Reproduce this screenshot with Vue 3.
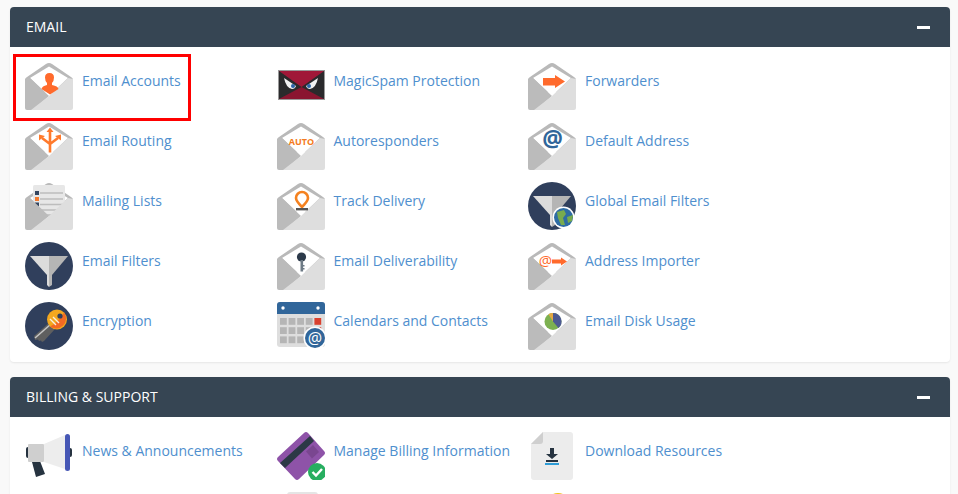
<script setup>
const email = [
  { label: 'Email Accounts', icon: 'person', env: true, selected: true },
  { label: 'MagicSpam Protection', icon: 'magic' },
  { label: 'Forwarders', icon: 'arrow', env: true },
  { label: 'Email Routing', icon: 'routing', env: true },
  { label: 'Autoresponders', icon: 'auto', env: true },
  { label: 'Default Address', icon: 'at', env: true },
  { label: 'Mailing Lists', icon: 'list' },
  { label: 'Track Delivery', icon: 'pin', env: true },
  { label: 'Global Email Filters', icon: 'globalfilter' },
  { label: 'Email Filters', icon: 'filter' },
  { label: 'Email Deliverability', icon: 'key', env: true },
  { label: 'Address Importer', icon: 'importer', env: true },
  { label: 'Encryption', icon: 'encrypt' },
  { label: 'Calendars and Contacts', icon: 'calendar' },
  { label: 'Email Disk Usage', icon: 'pie', env: true }
]
const billing = [
  { label: 'News & Announcements', icon: 'news' },
  { label: 'Manage Billing Information', icon: 'card' },
  { label: 'Download Resources', icon: 'download' },
  { label: '', icon: 'none' },
  { label: '', icon: 'doc' },
  { label: '', icon: 'yellow' }
]
const sections = [
  { title: 'Email', items: email },
  { title: 'Billing & Support', items: billing }
]
const calCells = []
for (let r = 0; r < 3; r++) for (let c = 0; c < 5; c++) calCells.push({ x: 3 + c * 8.6, y: 16 + r * 9.2, red: c === 4 && r < 2 })
</script>

<template>
  <div class="page">
    <section v-for="s in sections" :key="s.title" class="panel">
      <header class="panel-head">
        <h2>{{ s.title }}</h2>
        <span class="collapse" aria-label="Collapse"></span>
      </header>
      <div class="grid">
        <a v-for="it in s.items" :key="it.label + it.icon" class="item" href="#" @click.prevent>
          <span v-if="it.selected" class="selected"></span>
          <svg class="ico" viewBox="0 0 48 48" width="48" height="48">
            <g v-if="it.env || it.icon === 'list'">
              <path d="M0 18 Q0 16 2 15 L21 2 Q24 0 27 2 L46 15 Q48 16 48 18 L48 30 L0 30Z" fill="#b9b9b9" />
              <path d="M5 16 L24 4.500 L43 16 L24 34Z" fill="#fff" />
            </g>
            <g v-if="it.icon === 'list'">
              <rect x="8" y="3" width="32" height="32" rx="1.500" fill="#e7e7e7" />
              <path d="M15 11 H38 M15 17 H38 M15 22.500 H38 M15 28 H38 M15 33 H30" stroke="#bdbdbd" stroke-width="1.500" />
              <rect x="10" y="9" width="4" height="4" fill="#34455f" />
              <rect x="10" y="15" width="4" height="4" fill="#f47b30" />
              <rect x="10" y="20.500" width="4" height="4" fill="#34455f" />
            </g>
            <g v-if="it.env || it.icon === 'list'">
              <path d="M0 17 L5 16 L24 34 L8 48 L2 48 Q0 48 0 46Z" fill="#bbb" />
              <path d="M48 17 L43 16 L24 34 L6 48 L46 48 Q48 48 48 46Z" fill="#dedede" />
            </g>

            <g v-if="it.icon === 'person'" fill="#ff6a2c">
              <path d="M20 15.500 Q20 11 24.500 11 Q29 11 29 15.500 Q29 19 27 21 L27 23 Q33 24 33.500 27 L25 32.500 L16.500 27 Q17 24 22 23 L22 21 Q20 19 20 15.500Z" />
            </g>
            <path v-if="it.icon === 'arrow'" d="M15 16 H27 V13 L37 19.500 L27 26 V23.500 H15Z" fill="#ff6a2c" />
            <g v-if="it.icon === 'routing'" fill="none" stroke="#ff7a2c" stroke-width="2.600">
              <path d="M25 30.500 V9 M25 22 L17 16 M25 22 L33 16" />
              <path d="M21.500 10 L25 5.500 L28.500 10Z M14 18.500 L14 12.500 L20 14Z M36 18.500 L36 12.500 L30 14Z" fill="#ff7a2c" stroke="none" />
            </g>
            <text v-if="it.icon === 'auto'" x="24.500" y="22.500" text-anchor="middle" class="auto">AUTO</text>
            <text v-if="it.icon === 'at'" x="24.500" y="25" text-anchor="middle" class="at">@</text>
            <g v-if="it.icon === 'importer'">
              <text x="17.500" y="24" text-anchor="middle" class="at2">@</text>
              <path d="M24 17.500 H33 V15.500 L39 19.500 L33 23.500 V21.500 H24Z" fill="#ff6a2c" />
            </g>
            <g v-if="it.icon === 'pin'">
              <path d="M25 25 Q19 19 19 16 A6 6 0 1 1 31 16 Q31 19 25 25Z" fill="none" stroke="#f58220" stroke-width="2.600" />
              <rect x="19" y="26" width="12" height="2.400" fill="#555" />
            </g>
            <g v-if="it.icon === 'key'">
              <circle cx="24.500" cy="15" r="4.600" fill="#2c3a4a" />
              <rect x="23.500" y="18" width="2.600" height="11.500" fill="#6d7a85" />
              <rect x="26" y="23" width="1.500" height="1.500" fill="#6d7a85" />
              <rect x="26" y="26" width="1.500" height="1.500" fill="#6d7a85" />
            </g>
            <g v-if="it.icon === 'pie'">
              <circle cx="25" cy="19.500" r="8.500" fill="#7cb050" />
              <path d="M25 19.500 V11 A8.500 8.500 0 0 1 30.500 26Z" fill="#4d5a93" />
              <path d="M25 19.500 V11 A8.500 8.500 0 0 0 20.500 12.300Z" fill="#e5a844" />
            </g>

            <g v-if="it.icon === 'magic'">
              <rect x="1" y="8" width="47" height="30" fill="#999" />
              <rect x="2" y="9" width="45" height="28" fill="#2a2a2c" />
              <path d="M2 9 H47 L24.500 25Z" fill="#a01838" />
              <path d="M2 37 H47 L24.500 25Z" fill="#8a1530" />
              <path d="M7 16 L19 24 Q18 27 15 27 Q9 26 7 16Z" fill="#f2f2f2" />
              <path d="M41 16 L29 24 Q30 27 33 27 Q39 26 41 16Z" fill="#f2f2f2" />
              <circle cx="16" cy="24" r="2" fill="#2a63a8" />
              <circle cx="32" cy="24" r="2" fill="#2a63a8" />
            </g>

            <g v-if="it.icon === 'filter' || it.icon === 'globalfilter'">
              <circle cx="24" cy="24" r="24" fill="#303f5c" />
              <path d="M5 14 H24 V33 H22Z" fill="#dcdcdc" />
              <path d="M43 14 H24 V33 H27Z" fill="#b5b5b5" />
              <path d="M22 33 H24 V45 L22 43Z" fill="#dcdcdc" />
              <path d="M24 33 H27 V43 L24 45Z" fill="#b5b5b5" />
            </g>
            <g v-if="it.icon === 'globalfilter'">
              <circle cx="35.500" cy="35.500" r="11" fill="#fff" />
              <circle cx="35.500" cy="35.500" r="9.500" fill="#2e6ca4" />
              <path d="M29 30 L36 28 L38 32 L35 36 L37 43 L33 43 L30 36Z M39 35 L45 33 L44 39 L40 41Z" fill="#78ab4e" />
            </g>

            <g v-if="it.icon === 'encrypt'">
              <circle cx="24" cy="24" r="24" fill="#303f5c" />
              <path d="M25 20 L9 34 L10 38 L13 37.500 L14 39 L16 38.500 L17 40 L19 39 L30 27Z" fill="#5f5f5f" />
              <path d="M10 36 L26 22" stroke="#c7c7c7" stroke-width="1.500" />
              <circle cx="32" cy="17.500" r="10" fill="#f3a81f" />
              <path d="M39 10.500 A10 10 0 0 1 25 24.500 Q33 21 39 10.500Z" fill="#f36a24" />
              <circle cx="35" cy="14" r="2.600" fill="#303f5c" />
              <path d="M25 17 L31 23 M28 15 L34 21" stroke="#f8efe0" stroke-width="1.400" />
            </g>

            <g v-if="it.icon === 'calendar'">
              <rect x="0" y="0" width="48" height="45" rx="3" fill="#dedede" />
              <path d="M0 12 V3 Q0 0 3 0 H45 Q48 0 48 3 V12Z" fill="#31669a" />
              <circle cx="6" cy="6" r="1.700" fill="#fff" />
              <circle cx="41" cy="6" r="1.700" fill="#fff" />
              <rect v-for="(c, i) in calCells" :key="i" :x="c.x" :y="c.y" width="6.800" height="6.800" :fill="c.red ? '#d9412f' : '#b5b5b5'" />
              <circle cx="38" cy="36" r="11.500" fill="#fff" />
              <circle cx="38" cy="36" r="10" fill="#31669a" />
              <text x="38" y="41.500" text-anchor="middle" class="at3">@</text>
            </g>

            <g v-if="it.icon === 'news'">
              <rect x="1" y="15" width="4" height="11" rx="2" fill="#263340" />
              <rect x="43" y="16" width="4" height="9" rx="2" fill="#263340" />
              <path d="M7 30 L15 29 L20 42 L11 45Z" fill="#263340" />
              <rect x="3" y="12" width="16" height="18" rx="1" fill="#cfcfcf" />
              <path d="M19 12 L40 3 V37 L19 30Z" fill="#ededed" />
              <rect x="40" y="2" width="5" height="37" rx="2.500" fill="#4657b5" />
            </g>

            <g v-if="it.icon === 'card'">
              <path d="M1 25 L27 1 Q29 -1 31 1 L47 19 Q49 21 47 23 L22 47 Q20 49 18 47 L1 29 Q-1 27 1 25Z" fill="#8e53a8" />
              <path d="M3 31 L33 4 L37 9 L8 36Z" fill="#2c3946" />
              <path d="M29 19.500 L36 13 L42 20 L35 26.500Z" fill="#7a4690" />
              <circle cx="40" cy="40" r="9" fill="#27ae60" />
              <path d="M35.500 40 L39 43.500 L45 37" fill="none" stroke="#fff" stroke-width="2.400" />
            </g>

            <g v-if="it.icon === 'download'">
              <path d="M15 0 H42 Q45 0 45 3 V45 Q45 48 42 48 H6 Q3 48 3 45 V12Z" fill="#ececec" />
              <path d="M3 12 L15 0 V9 Q15 12 12 12Z" fill="#cfcfcf" />
              <path d="M22 16 H26 V22 H30 L24 27 L18 22 H22Z" fill="#263340" />
              <rect x="18" y="28" width="12" height="2" fill="#263340" />
              <rect x="17" y="31" width="14" height="2" fill="#2c9bd6" />
            </g>

            <rect v-if="it.icon === 'doc'" x="10" y="0" width="31" height="48" rx="3" fill="#e5e5e5" />
            <circle v-if="it.icon === 'yellow'" cx="30" cy="13" r="12" fill="#f2c21a" />
          </svg>
          <span v-if="it.label" class="label">{{ it.label }}</span>
        </a>
      </div>
    </section>
  </div>
</template>

<style>
html, body { margin: 0; height: 494px; overflow: hidden; background: #f9f9f9; }
</style>

<style scoped>
.page {
  padding: 7px 8px 0 10px;
  height: 487px;
  overflow: hidden;
  font-family: "Open Sans", "Noto Sans", sans-serif;
}
.panel {
  background: #fff;
  border-radius: 4px;
  box-shadow: 0 1px 2px rgba(0, 0, 0, 0.08);
  margin-bottom: 15px;
}
.panel-head {
  height: 40px;
  background: #364553;
  border-radius: 4px 4px 0 0;
  display: flex;
  align-items: center;
  justify-content: space-between;
  padding: 0 20px 0 16px;
}
.panel-head h2 {
  margin: 0 0 2px;
  font-size: 14px;
  font-weight: 400;
  color: #fff;
  text-transform: uppercase;
}
.collapse {
  display: block;
  width: 13px;
  height: 3px;
  background: #fff;
}
.grid {
  display: grid;
  grid-template-columns: repeat(3, 251.5px);
  grid-auto-rows: 60px;
  padding: 15px 15px 0;
}
.item {
  position: relative;
  display: flex;
  align-items: flex-start;
  gap: 9px;
  text-decoration: none;
}
.ico { flex: none; display: block; }
.label {
  font-size: 14px;
  line-height: 20px;
  padding-top: 9px;
  color: #4f8fce;
  white-space: nowrap;
}
.selected {
  position: absolute;
  left: -12px;
  top: -8px;
  width: 178px;
  height: 67px;
  border: 3px solid #f00;
  box-sizing: border-box;
}
.auto { font: 700 9px "Open Sans", sans-serif; fill: #f47b20; }
.at { font: 700 23px "Open Sans", sans-serif; fill: #31669a; }
.at2 { font: 400 15px "Open Sans", sans-serif; fill: #ff6a2c; }
.at3 { font: 400 16px "Open Sans", sans-serif; fill: #fff; }
</style>
